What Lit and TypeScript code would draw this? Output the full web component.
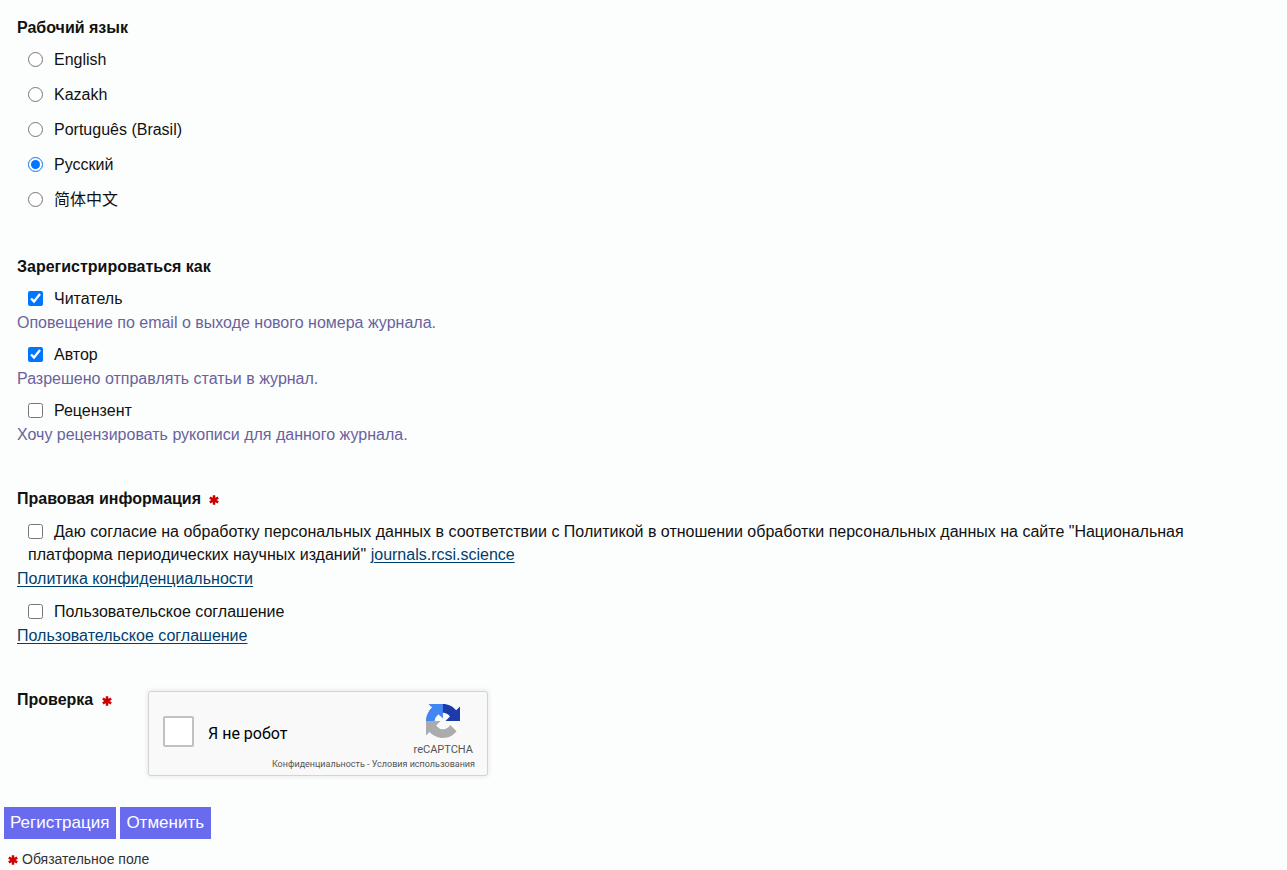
import { LitElement, html, css, svg } from "lit";
import { customElement, state } from "lit/decorators.js";

const asterisk = html`<svg class="required" viewBox="0 0 10 10" role="img" aria-label="обязательно">
  ${svg`<path d="M5 .2V9.8M.8 2.6L9.2 7.4M9.2 2.6L.8 7.4" fill="none" stroke="#c00" stroke-width="2.5"/>`}
</svg>`;

@customElement("captcha-box")
export class CaptchaBox extends LitElement {
  static styles = css`
    :host {
      display: flex;
      justify-content: space-between;
      box-sizing: border-box;
      flex: 0 1 340px;
      height: 85px;
      border: 1px solid #d3d3d3;
      border-radius: 3px;
      background: #f9f9f9;
      box-shadow: 0 0 4px 1px rgba(0, 0, 0, 0.08);
      font-family: Roboto, sans-serif;
      color: #000;
      position: relative;
    }
    .check {
      display: flex;
      align-items: center;
      gap: 14px;
      padding-left: 14px;
      font-size: 16px;
      margin-bottom: 4px;
    }
    .check span {
      padding-top: 4px;
    }
    .box {
      appearance: none;
      box-sizing: border-box;
      width: 31px;
      height: 31px;
      margin: 0;
      border: 2px solid #c1c1c1;
      border-radius: 2px;
      background: #fff;
    }
    .brand {
      display: flex;
      flex-direction: column;
      align-items: flex-end;
      padding: 12px 12px 0 0;
      color: #555;
    }
    .logo {
      width: 34px;
      height: 34px;
      margin-right: 15px;
    }
    .name {
      font-size: 11px;
      line-height: 14px;
      margin: 5px 2px 0 0;
    }
    .terms {
      position: absolute;
      right: 12px;
      bottom: 5px;
      font-size: 9px;
      line-height: 12px;
      white-space: nowrap;
      color: #555;
    }
    .terms a {
      color: #555;
      text-decoration: none;
    }
  `;

  render() {
    return html`
      <label class="check"><input class="box" type="checkbox" /><span>Я не робот</span></label>
      <div class="brand">
        <svg class="logo" viewBox="0 0 64 64" aria-hidden="true">
          <path fill="#1c3aa9" d="M64 31.955l-.013-1.37V4.687l-7.16 7.16C50.967 4.674 42.052.093 32.068.093c-10.39 0-19.622 4.96-25.458 12.64l11.736 11.86a15.55 15.55 0 0 1 4.754-5.334c2.05-1.6 4.952-2.906 8.968-2.906.485 0 .86.057 1.135.163 4.976.393 9.288 3.14 11.828 7.124l-8.307 8.307L64 31.953" />
          <path fill="#4285f4" d="M31.862.094l-1.37.013H4.594l7.16 7.16C4.58 13.127 0 22.043 0 32.027c0 10.39 4.96 19.622 12.64 25.458L24.5 45.75a15.55 15.55 0 0 1-5.334-4.754c-1.6-2.05-2.906-4.952-2.906-8.968 0-.485.057-.86.163-1.135.393-4.976 3.14-9.288 7.124-11.828l8.307 8.307L31.86.095" />
          <path fill="#ababab" d="M.001 32.045l.013 1.37v25.898l7.16-7.16c5.86 7.173 14.774 11.754 24.76 11.754 10.39 0 19.622-4.96 25.458-12.64l-11.736-11.86a15.55 15.55 0 0 1-4.754 5.334c-2.05 1.6-4.952 2.906-8.968 2.906-.485 0-.86-.057-1.135-.163-4.976-.393-9.288-3.14-11.828-7.124l8.307-8.307L.002 32.05" />
        </svg>
        <span class="name">reCAPTCHA</span>
      </div>
      <div class="terms"><a href="#">Конфиденциальность</a> - <a href="#">Условия использования</a></div>
    `;
  }
}

@customElement("app-root")
export class AppRoot extends LitElement {
  static styles = css`
    :host {
      display: block;
      min-height: 100vh;
      box-sizing: border-box;
      padding-top: 16px;
      background: #fcfefd;
      color: #111;
      font: 16px/24px "Liberation Sans", "Noto Sans CJK SC", Arial, sans-serif;
    }
    .section {
      margin: 0 100px 32px 17px;
      padding: 0;
      border: 0;
      min-width: 0;
    }
    .title {
      padding: 0;
      margin: 0 0 8px;
      font-weight: bold;
    }
    .required {
      width: 10px;
      height: 10px;
      margin-left: 4px;
      vertical-align: -1px;
    }
    .option {
      display: block;
      padding-left: 11px;
    }
    .option input {
      width: 15px;
      height: 15px;
      margin: 0 11px 0 0;
      vertical-align: -2px;
      accent-color: #0075ff;
    }
    .language {
      height: 24px;
      margin-bottom: 11px;
    }
    .item {
      margin-bottom: 8px;
    }
    .hint {
      color: #6a629c;
    }
    .consent {
      line-height: 23px;
      padding-top: 1px;
      padding-bottom: 1px;
    }
    .link {
      color: #00406f;
      text-underline-offset: 2px;
    }
    .verify {
      display: flex;
      align-items: flex-start;
      margin: 0 17px 31px;
    }
    .verify .title {
      flex: 0 0 131px;
      margin: 0;
    }
    .verify captcha-box {
      margin-top: 3px;
    }
    .actions {
      display: flex;
      gap: 4px;
      padding-left: 4px;
    }
    .button {
      height: 32px;
      padding: 0 7px 0 6px;
      border: 0;
      background: #686bee;
      color: #fff;
      font: 17px/32px "Liberation Sans", Arial, sans-serif;
    }
    .note {
      margin: 0;
      padding: 8px 8px 0;
      font-size: 14px;
      color: #333;
    }
    .note .required {
      margin: 0 4px 0 0;
    }
  `;

  @state() private language = "Русский";

  private languages = ["English", "Kazakh", "Português (Brasil)", "Русский", "简体中文"];

  private roles = [
    { name: "Читатель", hint: "Оповещение по email о выходе нового номера журнала.", on: true },
    { name: "Автор", hint: "Разрешено отправлять статьи в журнал.", on: true },
    { name: "Рецензент", hint: "Хочу рецензировать рукописи для данного журнала.", on: false },
  ];

  render() {
    return html`
      <fieldset class="section">
        <legend class="title">Рабочий язык</legend>
        ${this.languages.map(
          (name) => html`<label class="option language"><input
            type="radio" name="language" .checked=${name === this.language}
            @change=${() => (this.language = name)} />${name}</label>`
        )}
      </fieldset>
      <fieldset class="section">
        <legend class="title">Зарегистрироваться как</legend>
        ${this.roles.map(
          (role) => html`<div class="item">
            <label class="option"><input type="checkbox" .checked=${role.on} />${role.name}</label>
            <div class="hint">${role.hint}</div>
          </div>`
        )}
      </fieldset>
      <fieldset class="section">
        <legend class="title">Правовая информация ${asterisk}</legend>
        <div class="item">
          <label class="option consent"><input type="checkbox" />Даю согласие на обработку персональных данных в соответствии с Политикой в отношении обработки персональных данных на сайте "Национальная платформа периодических научных изданий" <a class="link" href="#">journals.rcsi.science</a></label>
          <a class="link" href="#">Политика конфиденциальности</a>
        </div>
        <div class="item">
          <label class="option consent"><input type="checkbox" />Пользовательское соглашение</label>
          <a class="link" href="#">Пользовательское соглашение</a>
        </div>
      </fieldset>
      <div class="verify">
        <div class="title">Проверка ${asterisk}</div>
        <captcha-box></captcha-box>
      </div>
      <div class="actions">
        <button class="button" type="submit">Регистрация</button>
        <button class="button" type="button">Отменить</button>
      </div>
      <p class="note">${asterisk}Обязательное поле</p>
    `;
  }
}
